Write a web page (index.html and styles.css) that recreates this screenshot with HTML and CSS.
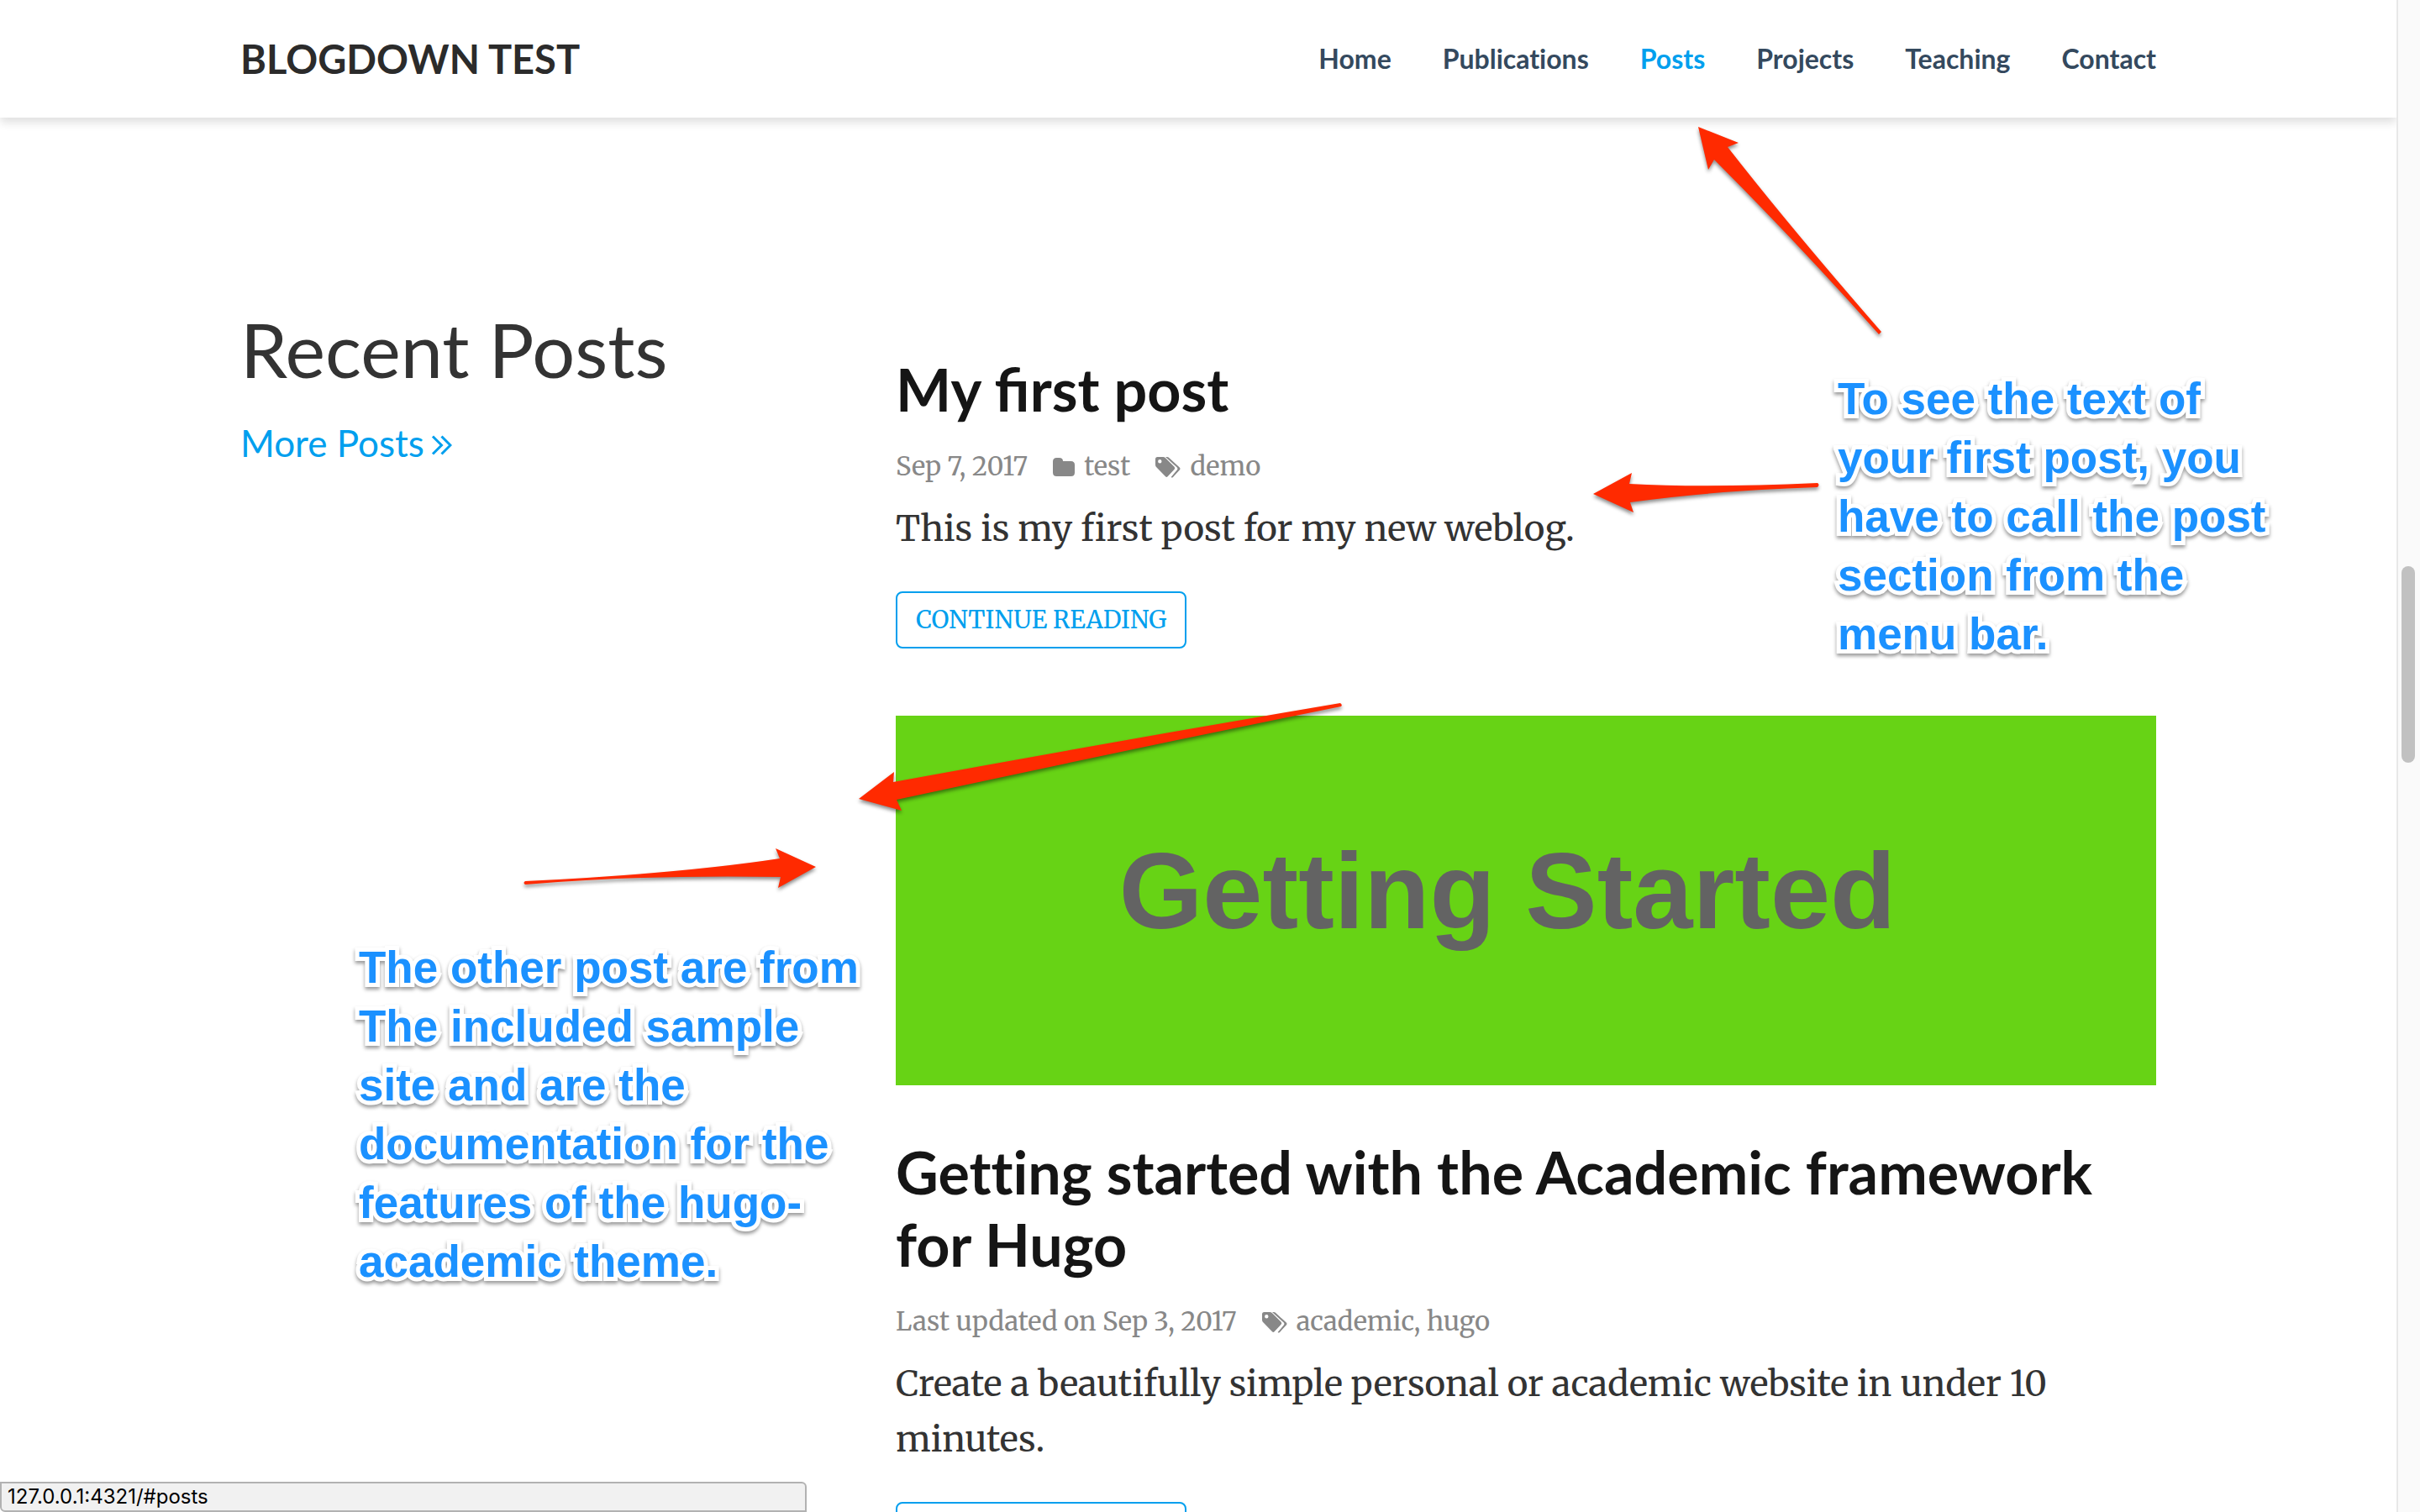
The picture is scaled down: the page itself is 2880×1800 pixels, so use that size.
FILE: index.html
```html
<!DOCTYPE html>
<html lang="en">
<head>
<meta charset="utf-8">
<title>Blogdown Test</title>
<link rel="stylesheet" href="styles.css">
</head>
<body>
<svg class="sprite" aria-hidden="true">
  <symbol id="icon-folder" viewBox="0 0 26 22"><path d="M0 4.500Q0 0 4.500 0h3Q12 0 12 4h9.500Q26 4 26 8.500v9q0 4.500-4.500 4.500h-17Q0 22 0 17.500z"/></symbol>
  <symbol id="icon-tags" viewBox="0 0 30 25"><path fill-rule="evenodd" d="M0 2.500Q0 0 2.500 0H9q1.800 0 3 1.200L22.600 11.800q1.200 1.500 0 3l-8 8.500q-1.300 1.200-2.600 0L1.300 12.300Q0 11 0 9.200zM5.300 3a2.200 2.200 0 1 0 0 4.400 2.200 2.200 0 0 0 0-4.400z"/><path d="M12 0h1.800q1.500 0 2.700 1.200L28.800 12.600q1.400 1.500 0 3L21 23.900q-1.200 1-2.400 0l7.200-8.300q1.200-1.500 0-3z"/></symbol>
</svg>

<header class="navbar">
  <div class="container navbar-inner">
    <a class="brand" href="#top">BLOGDOWN TEST</a>
    <nav class="menu">
      <a href="#top">Home</a>
      <a href="#publications">Publications</a>
      <a class="active" href="#posts">Posts</a>
      <a href="#projects">Projects</a>
      <a href="#teaching">Teaching</a>
      <a href="#contact">Contact</a>
    </nav>
  </div>
</header>

<main class="container section" id="posts">
  <div class="section-heading">
    <h1>Recent Posts</h1>
    <a class="more" href="#all">More Posts
      <svg class="chevrons" viewBox="0 0 25 24" aria-hidden="true"><path d="M2 1.500 12.500 12 2 22.500M12.500 1.500 23 12 12.500 22.500"/></svg>
    </a>
  </div>
  <div class="post-list">
    <article class="post">
      <h2>My first post</h2>
      <div class="meta">
        <span>Sep 7, 2017</span>
        <span class="term"><svg class="folder"><use href="#icon-folder"/></svg>test</span>
        <span class="term"><svg class="tags"><use href="#icon-tags"/></svg>demo</span>
      </div>
      <p>This is my first post for my new weblog.</p>
      <a class="btn" href="#first-post">CONTINUE READING</a>
    </article>
    <article class="post">
      <div class="banner">Getting Started</div>
      <h2 class="unligated">Getting started with the Academic framework for Hugo</h2>
      <div class="meta">
        <span>Last updated on Sep 3, 2017</span>
        <span class="term"><svg class="tags"><use href="#icon-tags"/></svg>academic, hugo</span>
      </div>
      <p>Create a beautifully simple personal or academic website in under 10 minutes.</p>
      <a class="btn" href="#getting-started">CONTINUE READING</a>
    </article>
  </div>
</main>

<div class="scrollbar"><div class="thumb"></div></div>
<div class="status">127.0.0.1:4321/#posts</div>

<svg class="arrow arrow-menu" viewBox="0 0 240 270"><path d="M21 21 69 40 56 45Q130 140 239 265L236 268Q140 160 40 60L33 72z"/></svg>
<svg class="arrow arrow-text" viewBox="0 0 290 80"><path d="M16 38 62 13 59 26Q150 31 283 25Q286 27 283 30Q160 34 60 48L64 60z"/></svg>
<svg class="arrow arrow-other" viewBox="0 0 600 150"><path d="M12 121 54 89 53 101Q320 52 585 7Q588 9 586 11Q320 65 57 122L63 135z"/></svg>
<svg class="arrow arrow-list" viewBox="0 0 370 80"><path d="M15 49Q12 51 15 53Q160 41 319 44L316 57 361 32 313 10 318 22Q200 40 15 49z"/></svg>
<p class="note note-menu">To see the text of your first post, you have to call the post section from the menu bar.</p>
<p class="note note-list">The other post are from The included sample site and are the documentation for the features of the hugo-academic theme.</p>
</body>
</html>
```
FILE: styles.css
```css
* { box-sizing: border-box; }
html { height: 100%; overflow: hidden; }
body {
  position: relative;
  height: 100%;
  margin: 0;
  padding-right: 28px;
  overflow: hidden;
  background: #fff;
  color: #333;
  font-family: Merriweather, "Noto Serif", "DejaVu Serif", serif;
  font-size: 42px;
  line-height: 66px;
}
a { color: #009fee; text-decoration: none; }
h1, h2, p { margin: 0; }
.sprite { display: none; }
.container { max-width: 2340px; margin: 0 auto; padding: 0 30px; }

.navbar { box-shadow: 0 6px 10px rgba(0, 0, 0, .12); font-family: Lato, sans-serif; font-weight: 700; }
.navbar-inner { display: flex; align-items: center; justify-content: space-between; height: 140px; }
.brand { color: #2b2b2b; font-size: 47px; }
.menu { display: flex; gap: 61px; font-size: 32px; font-variant-ligatures: no-common-ligatures; }
.menu a { color: #34495e; }
.menu .active { color: #009fee; }

.section { display: grid; grid-template-columns: 12fr 25fr; gap: 60px; padding-top: 221px; }
.section-heading { font-family: Lato, sans-serif; }
h1 { font-size: 90px; font-weight: 400; line-height: 108px; margin-bottom: 22px; }
.more { display: flex; align-items: center; gap: 8px; font-size: 44px; line-height: 72px; }
.chevrons { width: 25px; height: 24px; margin-top: 6px; fill: none; stroke: currentColor; stroke-width: 3; }

.post-list { display: grid; gap: 80px; padding-top: 59px; }
h2 { color: #151515; font-family: Lato, sans-serif; font-size: 70px; font-weight: 700; line-height: 86px; }
.unligated { font-variant-ligatures: no-common-ligatures; }
.meta { display: flex; gap: 30px; margin: 24px 0 16px; color: #888; font-size: 31px; line-height: 50px; }
.term { display: flex; align-items: center; gap: 11px; }
.term svg { margin-top: 2px; fill: currentColor; }
.folder { width: 26px; height: 22px; }
.tags { width: 30px; height: 25px; }
.btn {
  display: inline-block;
  margin-top: 42px;
  padding: 0 22px;
  border: 2px solid #009fee;
  border-radius: 8px;
  font-size: 29px;
  line-height: 64px;
  vertical-align: top;
}
.banner {
  display: flex;
  align-items: center;
  justify-content: center;
  height: 440px;
  margin-bottom: 60px;
  padding: 0 44px 22px 0;
  background: #67d315;
  color: #636363;
  font: 700 128px/1 "Liberation Sans", sans-serif;
}

.scrollbar { position: absolute; top: 0; right: 0; bottom: 0; width: 28px; padding: 674px 6px 0 4px; border-left: 2px solid #e8e8e8; background: #fafafa; }
.thumb { height: 234px; border-radius: 8px; background: #c1c1c1; }
.status {
  position: absolute;
  left: 0;
  bottom: 0;
  width: 960px;
  padding-left: 7px;
  border: 2px solid #b2b2b2;
  border-radius: 0 6px 0 6px;
  background: #f1f1f1;
  color: #000;
  font: 24px/32px Inter, sans-serif;
}

.arrow { position: absolute; fill: #ff2a00; filter: drop-shadow(0 3px 2px rgba(0, 0, 0, .45)); }
.arrow-menu { left: 2000px; top: 130px; width: 240px; height: 270px; }
.arrow-text { left: 1880px; top: 550px; width: 290px; height: 80px; }
.arrow-other { left: 1010px; top: 830px; width: 600px; height: 150px; }
.arrow-list { left: 610px; top: 1000px; width: 370px; height: 80px; }
.note {
  position: absolute;
  color: #1b91ff;
  font: 700 53px/70px "Liberation Sans", sans-serif;
  -webkit-text-stroke: 10px #fff;
  paint-order: stroke fill;
  filter: drop-shadow(0 3px 2px rgba(0, 0, 0, .4));
}
.note-menu { left: 2187px; top: 440px; width: 520px; }
.note-list { left: 427px; top: 1117px; width: 604px; }
```
